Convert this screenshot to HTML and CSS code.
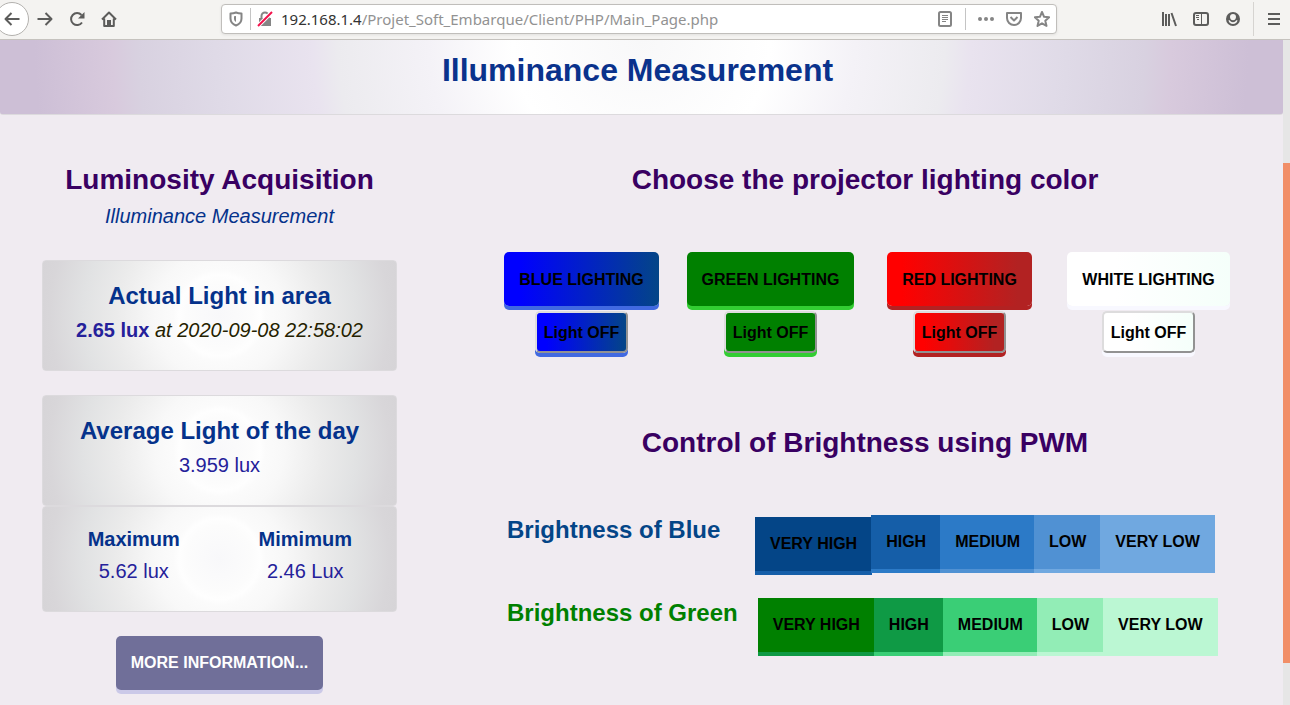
FILE: index.html
```html
<!DOCTYPE html>
<html lang="en">
<head>
<meta charset="utf-8">
<title>Illuminance Measurement</title>
<link rel="stylesheet" href="styles.css">
</head>
<body>
<div class="toolbar">
  <div class="nav">
    <button class="tool back" aria-label="Back"><svg viewBox="0 0 16 16"><path d="M15.500 8H1.500M7.500 2L1.500 8l6 6"/></svg></button>
    <button class="tool" aria-label="Forward"><svg viewBox="0 0 16 16"><path d="M.5 8h14M8.500 2l6 6-6 6"/></svg></button>
    <button class="tool" aria-label="Reload"><svg viewBox="0 0 16 16"><path d="M13 11.500A6 6 0 1 1 12.500 4"/><path class="solid" d="M15.500 1v6.500H9z"/></svg></button>
    <button class="tool" aria-label="Home"><svg viewBox="0 0 16 16"><path d="M1 8.500L8 1.500l7 7M3.200 7.500V15h9.600V7.500"/><path class="solid" d="M6 9h4v5H6z"/></svg></button>
  </div>
  <div class="address">
    <button class="tool soft" aria-label="Protection"><svg viewBox="0 0 16 16"><path d="M8 1.500c2 .8 3.500 1 5.500 1v5c0 3.500-2 5.700-5.500 7-3.500-1.300-5.500-3.500-5.500-7v-5c2 0 3.500-.2 5.500-1z"/><path d="M8 5v6c-1.500-1-2-2-2-3.500V5.300z" class="solid"/></svg></button>
    <span class="rule"></span>
    <button class="tool soft lock" aria-label="Connection not secure"><svg viewBox="0 0 16 16"><path d="M4.500 8V5a3.500 3.500 0 0 1 7 0v3"/><path class="solid" d="M2 7h12v8H2z"/><path class="halo" d="M1 15L15 1"/><path class="slash" d="M1 15L15 1"/></svg></button>
    <label class="url"><span class="host">192.168.1.4</span><input type="text" aria-label="Address" value="/Projet_Soft_Embarque/Client/PHP/Main_Page.php"></label>
    <button class="tool soft reader" aria-label="Reader view"><svg viewBox="0 0 16 16"><rect x="2" y="1" width="12" height="14" rx="1.500"/><path class="thin" d="M5 4.500h6M5 6.500h6M5 8.500h6M5 10.500h4"/></svg></button>
    <span class="rule"></span>
    <button class="tool soft dots" aria-label="Page actions"><svg viewBox="0 0 16 16"><circle class="solid" cx="2" cy="8" r="2"/><circle class="solid" cx="8" cy="8" r="2"/><circle class="solid" cx="14" cy="8" r="2"/></svg></button>
    <button class="tool soft" aria-label="Save"><svg viewBox="0 0 16 16"><path d="M1 2h14v5a7 7 0 0 1-14 0z"/><path d="M4.500 6L8 9.500 11.500 6"/></svg></button>
    <button class="tool soft" aria-label="Bookmark"><svg viewBox="0 0 16 16"><path d="M8 1l2.100 4.800 5 .5-3.800 3.500 1.200 5.100L8 12.300l-4.500 2.600 1.200-5.100L.9 6.300l5-.5z"/></svg></button>
  </div>
  <div class="extras">
    <button class="tool" aria-label="Library"><svg viewBox="0 0 16 16"><path d="M2 1v14M5 3v12M8 3v12M10.500 2L15 15"/></svg></button>
    <button class="tool" aria-label="Sidebars"><svg viewBox="0 0 16 16"><rect x="1" y="2" width="14" height="12" rx="2"/><path class="thin" d="M8.500 2v12M3 4.500h3M3 6.500h3M4 8.500h2"/></svg></button>
    <button class="tool" aria-label="Account"><svg viewBox="0 0 16 16"><circle class="solid" cx="8" cy="8" r="7"/><path class="face" d="M8 3a3 3 0 0 1 3 3c0 2-1.300 3.300-3 3.300S5 8 5 6a3 3 0 0 1 3-3zM3.500 9.200h1.200c.7 1.300 1.900 2 3.300 2s2.600-.7 3.300-2h1.200A4.700 4.700 0 0 1 8 13a4.700 4.700 0 0 1-4.500-3.800z"/></svg></button>
    <span class="rule tall"></span>
    <button class="tool" aria-label="Menu"><svg viewBox="0 0 16 16"><path d="M2 3h12M2 8h12M2 13h12"/></svg></button>
  </div>
</div>
<div class="viewport">
  <div class="page">
    <header class="banner"><h1>Illuminance Measurement</h1></header>
    <main class="content">
      <section class="measures">
        <h2>Luminosity Acquisition</h2>
        <p class="subtitle">Illuminance Measurement</p>
        <div class="card actual">
          <h3>Actual Light in area</h3>
          <p><strong>2.65 lux</strong> <em>at 2020-09-08 22:58:02</em></p>
        </div>
        <div class="card">
          <h3>Average Light of the day</h3>
          <p>3.959 lux</p>
        </div>
        <div class="card extremes">
          <div><h4>Maximum</h4><p>5.62 lux</p></div>
          <div><h4>Mimimum</h4><p>2.46 Lux</p></div>
        </div>
        <button class="btn more">MORE INFORMATION...</button>
      </section>
      <section class="controls">
        <h2>Choose the projector lighting color</h2>
        <div class="lights">
          <div class="light blue"><button class="btn">BLUE LIGHTING</button><button class="off">Light OFF</button></div>
          <div class="light green"><button class="btn">GREEN LIGHTING</button><button class="off">Light OFF</button></div>
          <div class="light red"><button class="btn">RED LIGHTING</button><button class="off">Light OFF</button></div>
          <div class="light white"><button class="btn">WHITE LIGHTING</button><button class="off">Light OFF</button></div>
        </div>
        <h2>Control of Brightness using PWM</h2>
        <div class="levels level-blue">
          <h3>Brightness of Blue</h3>
          <div class="scale"><button class="btn l1">VERY HIGH</button><button class="btn l2">HIGH</button><button class="btn l3">MEDIUM</button><button class="btn l4">LOW</button><button class="btn l5">VERY LOW</button></div>
        </div>
        <div class="levels level-green">
          <h3>Brightness of Green</h3>
          <div class="scale"><button class="btn l1">VERY HIGH</button><button class="btn l2">HIGH</button><button class="btn l3">MEDIUM</button><button class="btn l4">LOW</button><button class="btn l5">VERY LOW</button></div>
        </div>
      </section>
    </main>
  </div>
  <div class="scrollbar"><div class="thumb"></div></div>
</div>
</body>
</html>
```
FILE: styles.css
```css
* { box-sizing: border-box; }
body {
  margin: 0;
  height: 100vh;
  display: flex;
  flex-direction: column;
  overflow: hidden;
  background: #f0ebf1;
  font-family: "Liberation Sans", Arial, sans-serif;
}
h1, h2, h3, h4, p { margin: 0; }
button { font-family: inherit; cursor: pointer; }

/* Browser toolbar */
.toolbar {
  flex: none;
  display: flex;
  align-items: center;
  height: 40px;
  padding: 0 8px 1px 0;
  background: #f4f3f1;
  border-bottom: 1px solid #c5c2be;
}
.nav { display: flex; align-items: center; gap: 16px; margin-left: -5px; margin-right: 104px; }
.tool {
  flex: none;
  display: flex;
  padding: 0;
  border: 0;
  background: none;
  color: #5c5c5b;
}
.tool svg {
  width: 16px;
  height: 16px;
  fill: none;
  stroke: currentColor;
  stroke-width: 2;
  stroke-linejoin: round;
}
.tool .solid { fill: currentColor; stroke: none; }
.tool .face { fill: #f4f3f1; stroke: none; }
.tool .thin { stroke-width: 1; }
.tool .halo { stroke: #fff; stroke-width: 4; }
.tool .slash { stroke: #f4114b; stroke-width: 2; }
.back {
  padding: 8px;
  margin-right: -8px;
  border: 1px solid #b3b1ae;
  border-radius: 50%;
  background: #fff;
}
.soft { color: #858585; }
.address {
  flex: 1;
  display: flex;
  align-items: center;
  gap: 12px;
  height: 30px;
  padding: 0 6px;
  border: 1px solid #c0bebb;
  border-radius: 4px;
  background: #fff;
  box-shadow: 0 1px 3px rgba(0, 0, 0, 0.08);
}
.address .rule { margin: 0 -6px; }
.lock { margin-right: -4px; }
.reader { margin-right: 6px; }
.dots { margin-left: 6px; }
.rule { flex: none; width: 1px; height: 22px; background: #c4c4c4; }
.rule.tall { height: 34px; background: #d6d4d1; margin: 0 -4px; }
.url {
  flex: 1;
  display: flex;
  min-width: 0;
  font: 15px/20px "Noto Sans", "Open Sans", sans-serif;
}
.host { color: #333; }
.url input {
  flex: 1;
  min-width: 0;
  padding: 0;
  border: 0;
  outline: 0;
  background: none;
  font: inherit;
  color: #929292;
}
.extras { display: flex; align-items: center; gap: 16px; margin-left: 104px; }

/* Page */
.viewport { flex: 1; display: flex; min-height: 0; }
.page { flex: 1; min-width: 0; overflow: hidden; }
.scrollbar { width: 7px; padding-top: 123px; background: #e6e6e6; }
.thumb { height: 500px; background: #f18e67; }

.banner {
  padding: 10px 24px 24px 16px;
  border-bottom: 1px solid #dcdadd;
  border-radius: 0 0 3px 3px;
  background: radial-gradient(circle at 50% 0, #f8f8f9, #fff 20%, #f4f2f7 33%, #ecebef 47%, #e9e3ef 51%, #dfdae7 66%, #d8d1e0 78%, #d8cadd 82%, #cdbfd6 94%, #cdbfd6);
  text-align: center;
}
h1 { font-size: 32px; line-height: 40px; color: #0a328c; }
h2 { font-size: 28px; line-height: 34px; color: #390062; text-align: center; }
h3 { font-size: 24px; line-height: 30px; color: #05328b; }
h4 { font-size: 20px; line-height: 24px; color: #05328b; }
.content {
  display: grid;
  grid-template-columns: 355fr 756fr;
  column-gap: 90px;
  padding: 48px 40px 0 42px;
}
.measures { text-align: center; font-size: 20px; line-height: 24px; }
.subtitle { margin: 7px 0 32px; font-style: italic; color: #05328b; }
.card {
  padding: 20px 0 28px;
  border: 1px solid #dcdadd;
  border-radius: 4px;
  background: radial-gradient(circle, #f8f8fa, #fcfcfc 18%, #fefefe 22%, #fbfbfb 25%, #f8f8f8 35%, #ebebeb 56%, #e1e2e3 74%, #d8d6d9 92%, #d6d4d7);
  color: #25219a;
}
.card p { margin-top: 7px; }
.card em { color: #261f00; }
.actual { margin-bottom: 24px; }
.extremes {
  display: grid;
  grid-template-columns: 1fr 1fr;
  gap: 0;
  padding: 20px 5px 28px;
}
.extremes p { margin-top: 8px; }

.btn {
  padding: 15px;
  border: 0;
  border-radius: 5px;
  font-size: 16px;
  font-weight: bold;
  line-height: 24px;
  color: #000;
  white-space: nowrap;
}
.more { margin-top: 24px; background: #706f99; color: #fff; box-shadow: 0 4px #cbc9e8; }

.lights { display: grid; grid-template-columns: repeat(4, 1fr); margin: 55px 0 73px; }
.light { display: flex; flex-direction: column; align-items: center; gap: 5px; }
.light .btn { padding: 16px 15px 14px; }
.off {
  padding: 8px 7px 6px;
  border: 2px solid;
  border-color: #dddcdd #929292 #929292 #dddcdd;
  border-radius: 5px;
  font-size: 16px;
  font-weight: bold;
  line-height: 24px;
  color: #000;
}
.blue button { background: linear-gradient(to right, #00f 10%, #044587); box-shadow: 0 4px #4169e1; }
.green button { background: #008000; box-shadow: 0 4px #32cd32; }
.red button { background: linear-gradient(to right, #f00 10%, #b22222 90%); box-shadow: 0 4px #b22222; }
.white button { background: linear-gradient(to right, #fff 30%, #f5fffa); box-shadow: 0 4px #f8f8ff; }

.levels { display: flex; align-items: flex-start; padding-left: 20px; }
.levels h3 { flex: none; min-width: 228px; margin-right: 20px; }
.scale { display: flex; align-items: flex-start; }
.scale .btn { border-radius: 0; box-shadow: 0 4px var(--edge); }
.scale .btn + .btn { margin-left: -1px; }
.level-blue { margin-top: 55px; margin-bottom: 27px; }
.level-blue h3 { color: #044587; }
.level-green h3 { color: #008000; }
.level-blue .l1 { background: #044587; --edge: #155ea8; margin-top: 2px; }
.level-blue .l2 { background: #155ea8; --edge: #2c7ac7; }
.level-blue .l3 { background: #2c7ac7; --edge: #5091d3; }
.level-blue .l4 { background: #5091d3; --edge: #70a8e0; }
.level-blue .l5 { background: #70a8e0; --edge: #70a8e0; }
.level-green .l1 { background: #008000; --edge: #0f9a45; }
.level-green .l2 { background: #0f9a45; --edge: #3ace76; }
.level-green .l3 { background: #3ace76; --edge: #92edb6; }
.level-green .l4 { background: #92edb6; --edge: #bbf7d3; }
.level-green .l5 { background: #bbf7d3; --edge: #bbf7d3; }
```
